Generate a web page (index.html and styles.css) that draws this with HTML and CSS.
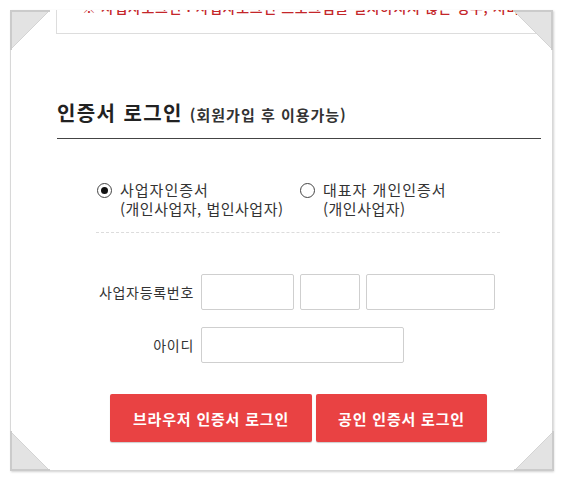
FILE: index.html
```html
<!DOCTYPE html>
<html lang="ko">
<head>
<meta charset="utf-8">
<title>인증서 로그인</title>
<link rel="stylesheet" href="styles.css">
</head>
<body>
<div class="wrap">
  <div class="frame">
    <div class="notice">※ 사업자로그인 : 사업자로그인 프로그램을 설치하시지 않은 경우, 서비스를 위해 설치해주세요.</div>

    <h2 class="title">인증서 로그인 <small>(회원가입 후 이용가능)</small></h2>

    <div class="options">
      <label class="opt opt-1">
        <input type="radio" name="cert" checked>
        <span class="opt-text"><span class="l1">사업자인증서</span><br><span class="l2">(개인사업자, 법인사업자)</span></span>
      </label>
      <label class="opt">
        <input type="radio" name="cert">
        <span class="opt-text"><span class="l1">대표자 개인인증서</span><br><span class="l2">(개인사업자)</span></span>
      </label>
    </div>

    <div class="form">
      <div class="row">
        <span class="lbl">사업자등록번호</span>
        <input class="inp w1" type="text">
        <input class="inp w2" type="text">
        <input class="inp w3" type="text">
      </div>
      <div class="row">
        <span class="lbl">아이디</span>
        <input class="inp w4" type="text">
      </div>
    </div>

    <div class="buttons">
      <button class="btn b1">브라우저 인증서 로그인</button>
      <button class="btn b2">공인 인증서 로그인</button>
    </div>
  </div>

  <svg class="corner tl" width="40" height="40" viewBox="0 0 40 40"><polygon points="0,0 40,0 0,40" fill="#e3e3e3"/><line x1="40" y1="0" x2="0" y2="40" stroke="#d4d4d4" stroke-width="1"/><polyline points="1,40 1,1 40,1" fill="none" stroke="#cbcbcb" stroke-width="2"/></svg>
  <svg class="corner tr" width="40" height="40" viewBox="0 0 40 40"><polygon points="0,0 40,0 40,40" fill="#e3e3e3"/><line x1="0" y1="0" x2="40" y2="40" stroke="#d4d4d4" stroke-width="1"/><polyline points="0,1 39,1 39,40" fill="none" stroke="#cbcbcb" stroke-width="2"/></svg>
  <svg class="corner bl" width="40" height="40" viewBox="0 0 40 40"><polygon points="0,0 0,40 40,40" fill="#e3e3e3"/><line x1="0" y1="0" x2="40" y2="40" stroke="#d4d4d4" stroke-width="1"/><polyline points="1,0 1,39 40,39" fill="none" stroke="#cbcbcb" stroke-width="2"/></svg>
  <svg class="corner br" width="40" height="40" viewBox="0 0 40 40"><polygon points="40,0 40,40 0,40" fill="#e3e3e3"/><line x1="40" y1="0" x2="0" y2="40" stroke="#d4d4d4" stroke-width="1"/><polyline points="39,0 39,39 0,39" fill="none" stroke="#cbcbcb" stroke-width="2"/></svg>
</div>
</body>
</html>
```

FILE: styles.css
```css
html, body {
  margin: 0;
  padding: 0;
  background: #fff;
}
body {
  font-family: "Noto Sans CJK KR", "Noto Sans", sans-serif;
  color: #333;
}
.wrap {
  position: relative;
  width: 564px;
  height: 482px;
}
.frame {
  position: absolute;
  left: 10px;
  top: 10px;
  width: 543px;
  height: 461px;
  box-sizing: border-box;
  border: 1px solid #d8d8d8;
  border-top: none;
  box-shadow: 1px 1px 2px rgba(0,0,0,0.18);
  overflow: hidden;
  background: #fff;
}
.notice {
  margin: -14px 0 0 45px;
  border: 1px solid #dddddd;
  border-right: none;
  padding: 0 0 16px 25px;
  font-size: 14px;
  line-height: 20px;
  font-weight: 500;
  letter-spacing: 0.6px;
  color: #c4262a;
  white-space: nowrap;
  overflow: hidden;
}
.title {
  margin: 65px 0 0 46px;
  width: 484px;
  padding: 0 0 9px 0;
  border-bottom: 1px solid #444;
  font-size: 20px;
  line-height: 28px;
  font-weight: 700;
  letter-spacing: 1.4px;
  color: #222;
}
.title small {
  font-size: 15px;
  font-weight: 700;
  letter-spacing: 1px;
  color: #333;
  margin-left: 0;
}
.options {
  display: flex;
  margin: 41px 0 0 85px;
  width: 404px;
  padding-bottom: 14px;
  border-bottom: 1px dashed #dcdcdc;
}
.opt {
  display: flex;
  align-items: flex-start;
  font-size: 15px;
  line-height: 19px;
  color: #333;
}
.l1 { letter-spacing: 1px; }
.l2 { letter-spacing: 0.5px; }
.opt-1 {
  width: 203px;
}
.opt input {
  appearance: none;
  -webkit-appearance: none;
  margin: 3px 8px 0 1px;
  width: 15px;
  height: 15px;
  border: 1px solid #444;
  border-radius: 50%;
  box-sizing: border-box;
  position: relative;
  flex: none;
  background: #fff;
}
.opt input:checked::after {
  content: "";
  position: absolute;
  left: 3px;
  top: 3px;
  width: 7px;
  height: 7px;
  border-radius: 50%;
  background: #111;
}
.form {
  margin: 41px 0 0 85px;
  display: flex;
  flex-direction: column;
  gap: 17px;
}
.row {
  display: flex;
  align-items: center;
  gap: 6px;
}
.lbl {
  flex: none;
  width: 98px;
  margin-right: 1px;
  text-align: right;
  white-space: nowrap;
  font-size: 14px;
  letter-spacing: 0.7px;
  color: #333;
}
.inp {
  box-sizing: border-box;
  height: 36px;
  border: 1px solid #cfcfcf;
  border-radius: 2px;
  margin: 0;
  padding: 0 6px;
  background: #fff;
  font-family: inherit;
}
.w1 { width: 93px; }
.w2 { width: 60px; }
.w3 { width: 129px; }
.w4 { width: 203px; }
.buttons {
  display: flex;
  gap: 4px;
  margin: 31px 0 0 99px;
}
.btn {
  height: 48px;
  border: none;
  border-radius: 2px;
  background: #e94243;
  color: #fff;
  font-family: inherit;
  font-size: 15px;
  font-weight: 700;
  letter-spacing: 0.8px;
  padding: 0;
  box-shadow: 0 1px 1px rgba(0,0,0,0.2);
}
.b1 { width: 202px; }
.b2 { width: 171px; }
.corner {
  position: absolute;
  display: block;
}
.tl { left: 10px; top: 10px; }
.tr { left: 513px; top: 10px; }
.bl { left: 10px; top: 431px; }
.br { left: 514px; top: 431px; }
```
